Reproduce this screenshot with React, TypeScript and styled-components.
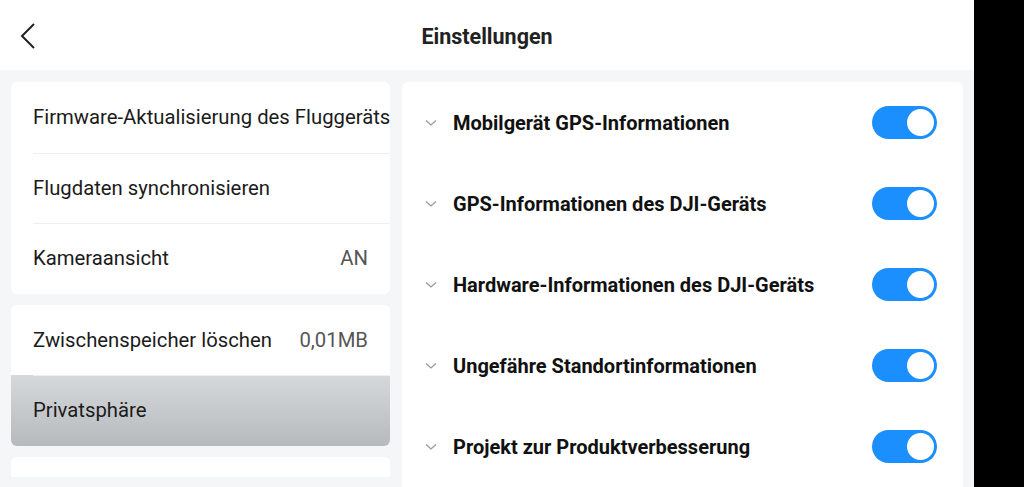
import React from "react";
import styled, { createGlobalStyle } from "styled-components";

const Global = createGlobalStyle`
  html, body {
    margin: 0;
    padding: 0;
    background: #000;
    font-family: Roboto, "Noto Sans", "Liberation Sans", sans-serif;
  }
  * { box-sizing: border-box; }
`;

const leftGroups = [
  [
    { label: "Firmware-Aktualisierung des Fluggeräts" },
    { label: "Flugdaten synchronisieren" },
    { label: "Kameraansicht", value: "AN" },
  ],
  [
    { label: "Zwischenspeicher löschen", value: "0,01MB" },
    { label: "Privatsphäre", active: true },
  ],
  [{ label: "" }],
];

const privacy = [
  "Mobilgerät GPS-Informationen",
  "GPS-Informationen des DJI-Geräts",
  "Hardware-Informationen des DJI-Geräts",
  "Ungefähre Standortinformationen",
  "Projekt zur Produktverbesserung",
];

const App = () => {
  return (
    <>
      <Global />
      <Screen>
        <Header>
          <BackButton>
            <svg width="18" height="28" viewBox="0 0 18 28">
              <path d="M15 2 L3 14 L15 26" fill="none" stroke="#222" strokeWidth="2" />
            </svg>
          </BackButton>
          <Title>Einstellungen</Title>
        </Header>
        <Body>
          <Sidebar>
            {leftGroups.map((group, gi) => (
              <Card key={gi}>
                {group.map((item, i) => (
                  <MenuRow key={i} $active={!!item.active} $first={i === 0}>
                    <MenuLabel>{item.label}</MenuLabel>
                    {item.value && <MenuValue>{item.value}</MenuValue>}
                  </MenuRow>
                ))}
              </Card>
            ))}
          </Sidebar>
          <Panel>
            {privacy.map((label) => (
              <OptionRow key={label}>
                <Chevron>
                  <svg width="12" height="8" viewBox="0 0 12 8">
                    <path d="M1 1.5 L6 6 L11 1.5" fill="none" stroke="#9a9a9a" strokeWidth="1.3" />
                  </svg>
                </Chevron>
                <OptionLabel>{label}</OptionLabel>
                <Toggle>
                  <Knob />
                </Toggle>
              </OptionRow>
            ))}
          </Panel>
        </Body>
      </Screen>
    </>
  );
};

const Screen = styled.div`
  width: 974px;
  height: 487px;
  background: #f5f6f7;
  overflow: hidden;
  display: flex;
  flex-direction: column;
`;

const Header = styled.div`
  height: 70px;
  flex-shrink: 0;
  background: #fff;
  display: flex;
  align-items: center;
  justify-content: center;
  position: relative;
`;

const BackButton = styled.div`
  position: absolute;
  left: 19px;
  top: 22px;
  width: 18px;
  height: 28px;
`;

const Title = styled.div`
  font-size: 21.5px;
  font-weight: 700;
  color: #222;
  margin-top: 2px;
`;

const Body = styled.div`
  flex: 1;
  display: flex;
  gap: 12px;
  padding: 12px 11px 0 11px;
  min-height: 0;
`;

const Sidebar = styled.div`
  width: 379px;
  height: 395px;
  flex-shrink: 0;
  overflow: hidden;
  display: flex;
  flex-direction: column;
  gap: 11px;
`;

const Card = styled.div`
  background: #fff;
  border-radius: 6px;
  overflow: hidden;
  flex-shrink: 0;
`;

const MenuRow = styled.div<{ $active: boolean; $first: boolean }>`
  height: 70.5px;
  display: flex;
  align-items: center;
  justify-content: space-between;
  padding: 0 22px 0 22px;
  position: relative;
  background: ${(p) => (p.$active ? "linear-gradient(#d6d9dc, #b7babd)" : "#fff")};
  ${(p) =>
    !p.$first &&
    `
    &::before {
      content: "";
      position: absolute;
      top: 0;
      left: 22px;
      right: 0;
      height: 1px;
      background: #eceef0;
    }
  `}
`;

const MenuLabel = styled.span`
  font-size: 20.3px;
  color: #1b1b1b;
  white-space: nowrap;
`;

const MenuValue = styled.span`
  font-size: 20.3px;
  color: #555;
  white-space: nowrap;
  margin-left: 16px;
`;

const Panel = styled.div`
  flex: 1;
  background: #fff;
  border-radius: 6px 6px 0 0;
  display: flex;
  flex-direction: column;
`;

const OptionRow = styled.div`
  height: 81px;
  flex-shrink: 0;
  display: flex;
  align-items: center;
  padding: 0 26px 0 23px;
`;

const Chevron = styled.div`
  width: 12px;
  height: 8px;
  display: flex;
  margin-right: 16px;
`;

const OptionLabel = styled.div`
  flex: 1;
  font-size: 20px;
  font-weight: 700;
  color: #111;
  white-space: nowrap;
`;

const Toggle = styled.div`
  width: 65px;
  height: 33px;
  border-radius: 17px;
  background: #1b8ffd;
  padding: 3px;
  display: flex;
  justify-content: flex-end;
`;

const Knob = styled.div`
  width: 27px;
  height: 27px;
  border-radius: 50%;
  background: #fff;
`;

export default App;
